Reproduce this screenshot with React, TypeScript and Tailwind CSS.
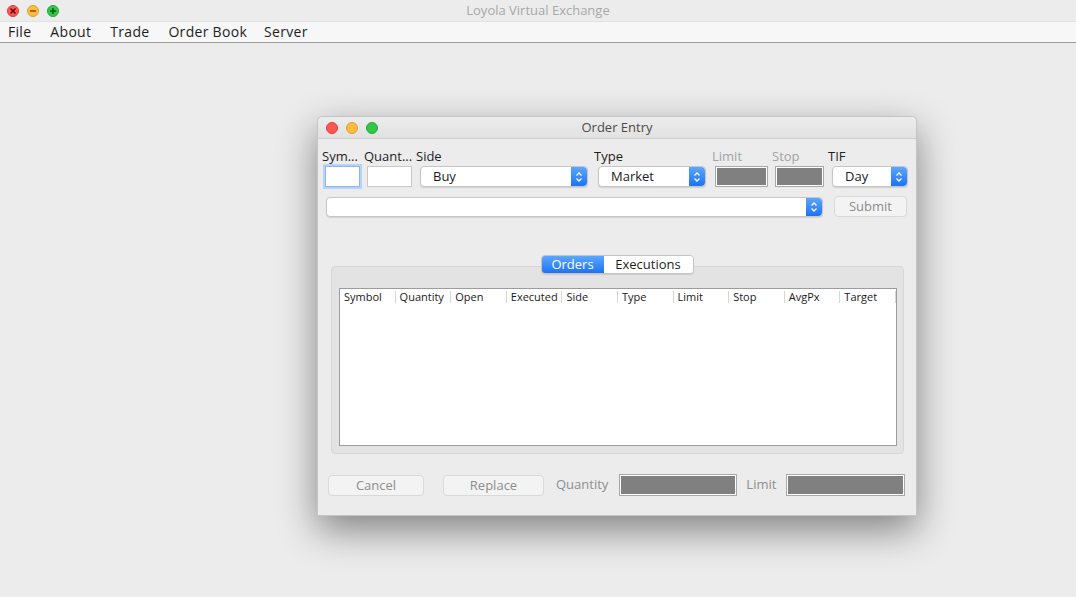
import React from "react";

const font = { fontFamily: '"Open Sans", "Liberation Sans", sans-serif' };

const columns = ["Symbol", "Quantity", "Open", "Executed", "Side", "Type", "Limit", "Stop", "AvgPx", "Target"];

// mac style traffic lights
function Lights({ glyphs }: { glyphs?: boolean }) {
  const items = [
    { bg: "bg-[#fc5753]", border: "border-[#df3d39]", g: "x" },
    { bg: "bg-[#fdbc40]", border: "border-[#de9f2b]", g: "-" },
    { bg: "bg-[#33c748]", border: "border-[#27a83a]", g: "+" },
  ];
  return (
    <div className="flex gap-[8px]">
      {items.map((it, i) => (
        <div
          key={i}
          className={`w-[12px] h-[12px] rounded-full border ${it.bg} ${it.border} flex items-center justify-center`}
        >
          {glyphs && (
            <svg width="8" height="8" viewBox="0 0 8 8">
              {it.g === "x" && (
                <path d="M1.5 1.5 L6.5 6.5 M6.5 1.5 L1.5 6.5" stroke="#6b0a06" strokeWidth="1.6" />
              )}
              {it.g === "-" && <path d="M1 4 H7" stroke="#8a5600" strokeWidth="1.6" />}
              {it.g === "+" && <path d="M1 4 H7 M4 1 V7" stroke="#0b5d14" strokeWidth="1.6" />}
            </svg>
          )}
        </div>
      ))}
    </div>
  );
}

function Arrows() {
  return (
    <div className="w-[16px] h-full rounded-r-[4px] bg-gradient-to-b from-[#5ba6fd] to-[#1a72f4] flex items-center justify-center">
      <svg width="8" height="12" viewBox="0 0 8 12" fill="none" stroke="#fff" strokeWidth="1.3">
        <path d="M1.5 4.5 L4 2 L6.5 4.5" />
        <path d="M1.5 7.5 L4 10 L6.5 7.5" />
      </svg>
    </div>
  );
}

function Select({ value, w }: { value: string; w: string }) {
  return (
    <div
      className={`${w} h-[21px] flex items-stretch bg-white rounded-[4px] border border-[#c6c6c6] shadow-[0_1px_1px_rgba(0,0,0,0.12)]`}
    >
      <div className="flex-1 pl-[12px] text-[13px] leading-[19px] text-[#1a1a1a]">{value}</div>
      <Arrows />
    </div>
  );
}

function GrayField({ w, h = "h-[21px]" }: { w: string; h?: string }) {
  return <div className={`${w} ${h} bg-[#808080] border border-[#a8a8a8] shadow-[inset_0_0_0_1px_#ffffff]`} />;
}

function Button({ label, w }: { label: string; w: string }) {
  return (
    <div
      className={`${w} h-[21px] rounded-[4px] border border-[#d9d9d9] bg-[#f3f3f3] text-[13px] leading-[19px] text-center text-[#8c8c8c]`}
    >
      {label}
    </div>
  );
}

export default function App() {
  return (
    <div className="w-[1076px] h-[597px] flex flex-col bg-[#ececec] overflow-hidden text-[#1e1e1e]" style={font}>
      {/* outer window title */}
      <div className="h-[21px] flex items-center bg-[#ececec] px-[7px] relative">
        <Lights glyphs />
        <div className="flex-1 text-center text-[13px] text-[#a8a8a8] pr-[52px] leading-[21px]">
          Loyola Virtual Exchange
        </div>
      </div>
      {/* menu bar */}
      <div className="h-[22px] flex items-center bg-[#f7f7f7] border-t border-[#e2e2e2] border-b border-b-[#9d9d9d] text-[14px] leading-[20px] tracking-[0.3px]">
        <span className="ml-[8px]">File</span>
        <span className="ml-[19px]">About</span>
        <span className="ml-[19px]">Trade</span>
        <span className="ml-[19px]">Order Book</span>
        <span className="ml-[17px]">Server</span>
      </div>

      {/* desktop */}
      <div className="relative flex-1">
        <div className="absolute left-[317px] top-[73px] w-[600px] h-[400px] flex flex-col bg-[#ececec] rounded-t-[5px] border border-[#c4c4c4] shadow-[0_14px_38px_rgba(0,0,0,0.45)]">
          {/* dialog title bar */}
          <div className="h-[22px] flex items-center px-[8px] bg-gradient-to-b from-[#ececec] to-[#e2e2e2] border-b border-[#cfcfcf] rounded-t-[5px]">
            <Lights />
            <div className="flex-1 text-center text-[13px] text-[#4a4a4a] pr-[52px] leading-[21px]">Order Entry</div>
          </div>

          {/* labels + fields */}
          <div className="flex pl-[4px] pt-[9px]">
            <div className="w-[42px] flex flex-col">
              <div className="text-[13px] leading-[16px]">Sym...</div>
              <div className="ml-[3px] mt-[2px] w-[35px] h-[21px] bg-white border border-[#8bb7ee] shadow-[0_0_0_2px_#b7d3f7]" />
            </div>
            <div className="w-[52px] flex flex-col">
              <div className="text-[13px] leading-[16px]">Quant...</div>
              <div className="ml-[3px] mt-[2px] w-[45px] h-[21px] bg-white border border-[#c8c8c8]" />
            </div>
            <div className="w-[178px] flex flex-col">
              <div className="text-[13px] leading-[16px]">Side</div>
              <div className="ml-[4px] mt-[2px]">
                <Select value="Buy" w="w-[168px]" />
              </div>
            </div>
            <div className="w-[118px] flex flex-col">
              <div className="text-[13px] leading-[16px]">Type</div>
              <div className="ml-[4px] mt-[2px]">
                <Select value="Market" w="w-[108px]" />
              </div>
            </div>
            <div className="w-[60px] flex flex-col">
              <div className="text-[13px] leading-[16px] text-[#a3a3a3]">Limit</div>
              <div className="ml-[3px] mt-[2px]">
                <GrayField w="w-[53px]" />
              </div>
            </div>
            <div className="w-[56px] flex flex-col">
              <div className="text-[13px] leading-[16px] text-[#a3a3a3]">Stop</div>
              <div className="ml-[3px] mt-[2px]">
                <GrayField w="w-[49px]" />
              </div>
            </div>
            <div className="w-[85px] flex flex-col">
              <div className="text-[13px] leading-[16px]">TIF</div>
              <div className="ml-[4px] mt-[2px]">
                <Select value="Day" w="w-[76px]" />
              </div>
            </div>
          </div>

          {/* combo + submit */}
          <div className="flex items-center mt-[9px] pl-[8px]">
            <div className="w-[497px] h-[20px] flex bg-white rounded-[4px] border border-[#c6c6c6] shadow-[0_1px_1px_rgba(0,0,0,0.1)]">
              <div className="flex-1" />
              <Arrows />
            </div>
            <div className="ml-[11px]">
              <Button label="Submit" w="w-[73px]" />
            </div>
          </div>

          {/* tabs */}
          <div className="mt-[38px] flex justify-center relative z-10">
            <div className="flex h-[19px] rounded-[4px] border border-[#c4c4c4] shadow-[0_1px_1px_rgba(0,0,0,0.1)] overflow-hidden text-[13px] leading-[17px]">
              <div className="w-[62px] text-center text-white bg-gradient-to-b from-[#5ba6fd] to-[#1a72f4]">Orders</div>
              <div className="w-[89px] text-center bg-white">Executions</div>
            </div>
          </div>

          {/* tab panel */}
          <div className="-mt-[8px] mx-[13px] w-[573px] h-[188px] bg-[#e3e3e3] border border-[#d7d7d7] rounded-[4px] pt-[21px] pl-[7px] pr-[6px] pb-[7px] flex">
            <div className="flex-1 bg-white border border-[#9c9c9c] flex flex-col">
              <div className="flex h-[16px] text-[11px] leading-[16px] text-[#1a1a1a]">
                {columns.map((c) => (
                  <div key={c} className="flex-1 flex items-center">
                    <span className="flex-1 pl-[4px] truncate">{c}</span>
                    <span className="w-px h-[12px] bg-[#d6d6d6]" />
                  </div>
                ))}
              </div>
              <div className="flex-1" />
            </div>
          </div>

          {/* bottom row */}
          <div className="flex items-center mt-[20px] pl-[10px]">
            <Button label="Cancel" w="w-[96px]" />
            <div className="ml-[19px]">
              <Button label="Replace" w="w-[101px]" />
            </div>
            <span className="ml-[12px] text-[13px] text-[#8e8e8e]">Quantity</span>
            <div className="ml-[11px]">
              <GrayField w="w-[118px]" h="h-[22px]" />
            </div>
            <span className="ml-[9px] text-[13px] text-[#8e8e8e]">Limit</span>
            <div className="ml-[10px]">
              <GrayField w="w-[119px]" h="h-[22px]" />
            </div>
          </div>
        </div>
      </div>
    </div>
  );
}
